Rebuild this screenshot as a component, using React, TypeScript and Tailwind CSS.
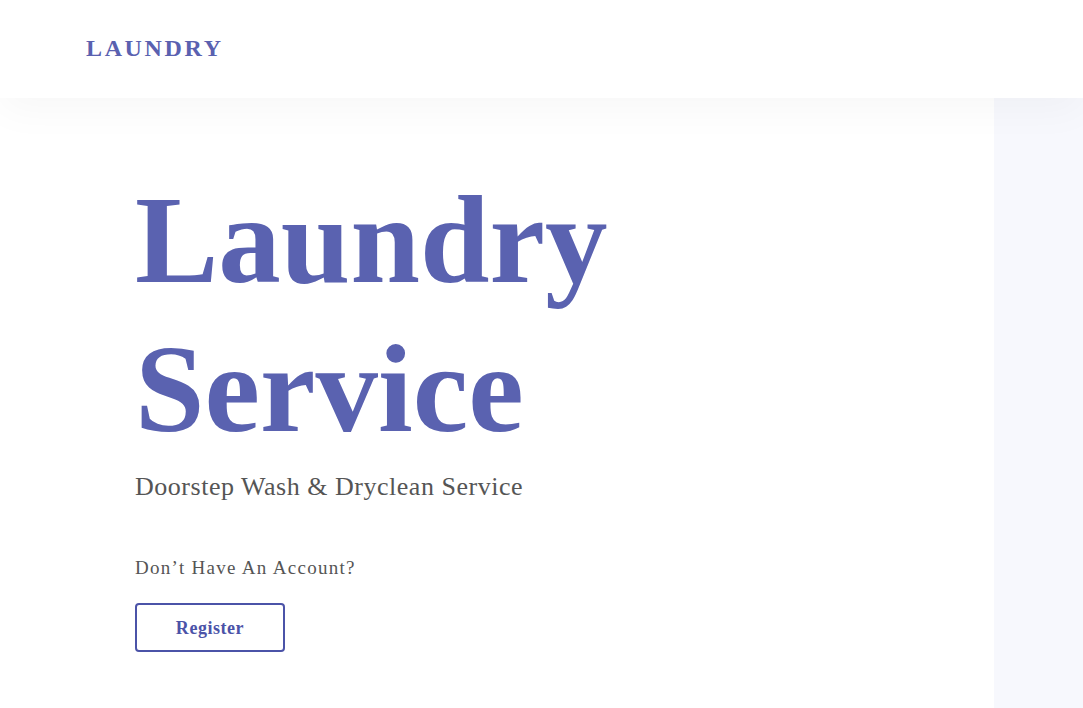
import React from 'react';

const App: React.FC = () => {
    return (
        <div className="min-h-screen h-[708px] flex flex-col bg-white overflow-hidden" style={{ fontFamily: '"Liberation Serif", "Times New Roman", serif' }}>
            {/* Top bar */}
            <header className="relative z-10 h-[98px] shrink-0 bg-white flex items-center px-[86px] shadow-[0_12px_40px_rgba(0,0,0,0.035)]">
                <span className="text-[24px] font-bold tracking-[0.11em] text-[#5a61b0] leading-none -mt-[2px]">LAUNDRY</span>
            </header>

            <main className="flex flex-1">
                <section className="w-[994px] shrink-0 pl-[135px] pt-[68px]">
                    <h1 className="text-[125px] leading-[149px] font-bold text-[#5a62b0]">
                        Laundry
                        <br />
                        Service
                    </h1>
                    <p className="mt-[3px] text-[26px] leading-[39px] tracking-[0.02em] text-[#555]">
                        Doorstep Wash &amp; Dryclean Service
                    </p>
                    <p className="mt-[48px] text-[19px] leading-[28px] tracking-[1.3px] text-[#555]">
                        Don’t Have An Account?
                    </p>
                    <button className="mt-[21px] w-[150px] h-[49px] pt-[2px] border-2 border-[#4b53a8] rounded-[4px] text-[18px] font-bold tracking-[0.03em] text-[#4b53a8]">
                        Register
                    </button>
                </section>
                <aside className="flex-1 bg-[#f7f8fd]" />
            </main>
        </div>
    );
};

export default App;
